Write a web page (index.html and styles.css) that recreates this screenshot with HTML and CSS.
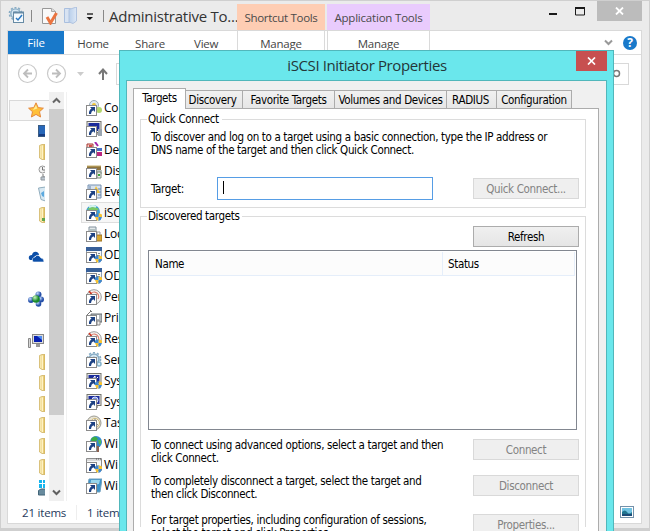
FILE: index.html
```html
<!DOCTYPE html>
<html lang="en">
<head>
<meta charset="utf-8">
<title>Administrative Tools</title>
<link rel="stylesheet" href="styles.css">
</head>
<body>
<svg class="defs" width="0" height="0">
  <defs>
    <linearGradient id="gold" x1="0" x2="1"><stop offset="0" stop-color="#fbeebb"/><stop offset=".6" stop-color="#efd78c"/><stop offset="1" stop-color="#d9b858"/></linearGradient>
    <linearGradient id="pale" x1="0" x2="1"><stop offset="0" stop-color="#b9cfeb"/><stop offset="1" stop-color="#dde8f6"/></linearGradient>
    <radialGradient id="blueball" cx=".35" cy=".3"><stop offset="0" stop-color="#c4dcff"/><stop offset="1" stop-color="#254fa8"/></radialGradient>
    <radialGradient id="greenball" cx=".35" cy=".3"><stop offset="0" stop-color="#c8f5bd"/><stop offset="1" stop-color="#198a2c"/></radialGradient>
    <symbol id="link" viewBox="0 0 16 16"><rect x=".5" y="5.500" width="10" height="10" fill="#fff" stroke="#8b8b8b"/><path d="M4 7h5v5L7.300 10.300Q5 11.500 5 14H3Q2.500 10.500 5.500 8.500Z" fill="#1d4284"/></symbol>
    <symbol id="shield" viewBox="0 0 16 16"><path d="M12.500 8 16 9.500V12H12.500ZM9 12H12.500V16Q9.500 15 9 12Z" fill="#f7c331"/><path d="M9 9.500 12.500 8V12H9ZM12.500 12H16Q15.500 15 12.500 16Z" fill="#3f88cf"/></symbol>
    <symbol id="folder" viewBox="0 0 16 16"><path d="M1.500 1.500 4 .5H7V15.500H4L1.500 14Z" fill="url(#gold)" stroke="#d1b463" stroke-width=".8"/><path d="M4.500 1.500V15" stroke="#fff2c4"/></symbol>
    <symbol id="gear" viewBox="0 0 16 16"><circle cx="8" cy="7" r="5" fill="#d5e7f3" stroke="#86abc4" stroke-width="1.500"/><circle cx="8" cy="7" r="6.500" fill="none" stroke="#86abc4" stroke-width="1.700" stroke-dasharray="2.200 1.900"/><circle cx="8" cy="7" r="2" fill="#fff" stroke="#86abc4"/></symbol>
    <symbol id="window" viewBox="0 0 16 16"><rect x=".5" y=".5" width="15" height="13" fill="#f7f9fb" stroke="#8da0b5"/><path d="M0 0H16V4H0Z" fill="#375f98"/><path d="M2 6.500h4M7 6.500h4M12 6.500h2M11 8.500h3" stroke="#7e8d9a"/></symbol>
    <symbol id="gauge" viewBox="0 0 16 16"><circle cx="8" cy="8" r="7.300" fill="#f6f6f4" stroke="#9b9b9b"/><path d="M4 9A4.500 4.500 0 1 1 12 10" fill="none" stroke="#dd8170" stroke-width="1.200"/><path d="M3 2 9 10" stroke="#c93523" stroke-width="1.600"/></symbol>
    <symbol id="screen" viewBox="0 0 16 16"><rect x="1" y=".5" width="14" height="11" fill="#eeeeea" stroke="#74746e"/><rect x="2.500" y="2" width="11" height="8" fill="#1b2c9c"/><path d="M6 12h6v2H6Z" fill="#aaa"/></symbol>
  </defs>
</svg>

<div class="explorer">
  <header class="titlebar">
    <div class="quick">
      <svg width="18" height="18" viewBox="0 0 18 18"><use href="#gear" width="15" height="15"/><rect x="5.500" y="5.500" width="10" height="10" fill="#f5fafd" stroke="#678ba5"/><path d="M5 5.500h11" stroke="#678ba5" stroke-width="2"/><path d="m8 11 2 2 4-5" fill="none" stroke="#2a78c2" stroke-width="1.500"/></svg>
      <i class="bar"></i>
      <svg class="props" width="16" height="18" viewBox="0 0 16 18"><path d="M.5 1.500h9l4 3v12H.5Z" fill="#f9f9f9" stroke="#989898"/><path d="M9.500 1.500v3h4" fill="#ddd" stroke="#aaa"/><path d="M5 10 8.500 16 14.500 6" fill="none" stroke="#ea7440" stroke-width="3"/></svg>
      <svg class="newf" width="14" height="18" viewBox="0 0 14 18"><path d="M.5 1.500h6v14h-6Z" fill="#d8e3f2" stroke="#a9bfdf"/><path d="M5 2.500 12.500 0V14L9 16.500 5 15Z" fill="url(#pale)" stroke="#b0c3e0"/></svg>
      <svg class="more" width="8" height="8" viewBox="0 0 8 8"><path d="M1 1h6" stroke="#222" stroke-width="1.400"/><path d="M.5 4h6.500L3.800 7Z" fill="#111"/></svg>
      <i class="bar"></i>
      <span class="title">Administrative To...</span>
    </div>
    <div class="ctx shortcut">Shortcut Tools</div>
    <div class="ctx application">Application Tools</div>
    <div class="controls">
      <svg width="62" height="20" viewBox="0 0 62 20"><path d="M14 13h8" stroke="#1a1a1a" stroke-width="2"/><path d="M40.500 7h9v7h-9Z" fill="none" stroke="#1a1a1a"/><path d="M40 7h10" stroke="#1a1a1a" stroke-width="2"/></svg>
      <div class="close"><svg width="9" height="8" viewBox="0 0 9 8"><path d="m1 .5 7 7m0-7-7 7" stroke="#fff" stroke-width="1.800"/></svg></div>
    </div>
  </header>

  <div class="frame">
    <nav class="ribbon">
      <span class="file">File</span>
      <span class="home">Home</span>
      <span class="share">Share</span>
      <span class="view">View</span>
      <span class="manage first">Manage</span>
      <span class="manage second">Manage</span>
      <div class="help">
        <svg width="9" height="7" viewBox="0 0 9 7"><path d="m1 1.500 3.500 3.500L8 1.500" fill="none" stroke="#999" stroke-width="2"/></svg>
        <span class="question">?</span>
      </div>
    </nav>
    <div class="address">
      <svg width="92" height="22" viewBox="0 0 92 22" fill="none"><g stroke="#c9c9c9" stroke-width="1.200"><circle cx="19.500" cy="10.500" r="9"/><circle cx="48.500" cy="10.500" r="9"/></g><path d="M24 10.500h-8m4-4-4 4 4 4M44 10.500h8m-4-4 4 4-4 4" stroke="#bdbdbd" stroke-width="1.800"/><path d="M69 9h7l-3.500 4Z" fill="#ccc"/></svg>
      <svg class="up" width="10" height="12" viewBox="0 0 10 12"><path d="M5 12V2M1 6l4-4.500L9 6" fill="none" stroke="#787878" stroke-width="2"/></svg>
      <div class="field"></div>
      <div class="search"><svg width="8" height="9" viewBox="0 0 8 9"><circle cx="3.500" cy="4.500" r="3" fill="none" stroke="#777" stroke-width="1.500"/></svg></div>
    </div>
    <div class="content">
      <div class="tree">
        <div class="node selected"><svg width="16" height="16" viewBox="0 0 16 16"><path d="m8 .8 2.200 4.800 5.200.6-3.900 3.500 1.100 5.300L8 12.400 3.400 15l1.100-5.300L.6 6.200l5.200-.6Z" fill="#ffc038" stroke="#e5893e"/><path d="m8 3 1.300 3.500L5 8Z" fill="#ffec94"/></svg></div>
        <div class="node sub"><svg width="16" height="16"><rect x=".5" y="2.500" width="15" height="11" fill="#2867b8" stroke="#395b83"/><path d="M1 11h14v2H1Z" fill="#163c82"/></svg></div>
        <div class="node sub"><svg width="16" height="16"><use href="#folder"/></svg></div>
        <div class="node sub"><svg width="16" height="16"><circle cx="4.500" cy="4.500" r="3.500" fill="#f4f4f4" stroke="#999"/><path d="M4.500 2v3H7M5 9v3h2" stroke="#777" fill="none"/><path d="M3 12h5v3H3Z" fill="#bcc6cf" stroke="#8e969d"/></svg></div>
        <div class="node sub"><svg width="16" height="16"><path d="m.5 2 7-1v14L3 13.500Z" fill="#d8e9f3" stroke="#91adbd"/><path d="m3 7 3-2v6L4 10Z" fill="#5ca9df"/></svg></div>
        <div class="node sub"><svg width="16" height="16"><use href="#folder"/><path d="M4 11h5v3H4Z" fill="#61a64a"/></svg></div>
        <div class="node"></div>
        <div class="node"><svg width="16" height="16" viewBox="0 0 16 16"><path d="M1 10Q0 6 4 6 5 2 9 3q2 1 2 3l-4 1-2 4H2Z" fill="#0b4ea8"/><path d="M5 13Q3 9 7 8q3-4 6 1 3 0 3 4Z" fill="#0b4ea8" stroke="#fff" stroke-width=".6"/></svg></div>
        <div class="node"></div>
        <div class="node"><svg width="16" height="16" viewBox="0 0 16 16"><g fill="url(#blueball)"><circle cx="10.500" cy="3.500" r="3"/><circle cx="3" cy="9" r="3"/><circle cx="13" cy="8.500" r="3"/><circle cx="10.500" cy="13" r="2.800"/></g><circle cx="8" cy="8" r="3.800" fill="url(#greenball)"/></svg></div>
        <div class="node"></div>
        <div class="node"><svg width="16" height="16" viewBox="0 0 16 16"><rect x="4.500" y="1.500" width="11" height="9" fill="#ddd" stroke="#888"/><path d="M6 3h8v6H6Z" fill="#0720b1"/><path d="m9 3 5 4V3Z" fill="#508cf0"/><path d="M8 11h4v3H8Z" fill="#999"/><path d="M.5 5.500h2v9h-2Z" fill="#d8d8d8" stroke="#888"/></svg></div>
        <div class="node sub"><svg width="16" height="16"><use href="#folder"/></svg></div>
        <div class="node sub"><svg width="16" height="16"><use href="#folder"/></svg></div>
        <div class="node sub"><svg width="16" height="16"><use href="#folder"/></svg></div>
        <div class="node sub"><svg width="16" height="16"><use href="#folder"/></svg></div>
        <div class="node sub"><svg width="16" height="16"><use href="#folder"/></svg></div>
        <div class="node sub"><svg width="16" height="16"><use href="#folder"/></svg></div>
        <div class="node sub"><svg width="16" height="16"><path d="M1 0h3v3H1ZM5 0h3v3H5ZM1 4h3v4H1ZM5 4h3v4H5Z" fill="#14b5ee"/><path d="M.5 10.500 3 9h5v6H.5Z" fill="#688b9e" stroke="#426578"/></svg></div>
      </div>
      <div class="scroll">
        <div class="arrow"><svg width="9" height="7" viewBox="0 0 9 7"><path d="M1 5.500 4.500 2 8 5.500" fill="none" stroke="#666" stroke-width="2"/></svg></div>
        <div class="thumb"></div>
        <div class="arrow down"><svg width="9" height="7" viewBox="0 0 9 7"><path d="M1 1.500 4.500 5 8 1.500" fill="none" stroke="#606060" stroke-width="2"/></svg></div>
      </div>
      <div class="list">
        <div class="item"><svg width="16" height="16"><circle cx="8" cy="5" r="4.500" fill="#dfe8ef" stroke="#9aabb7"/><circle cx="8" cy="5" r="2" fill="#efc535"/><circle cx="13" cy="10" r="3" fill="#b3d66d"/><use href="#link"/></svg>Co</div>
        <div class="item"><svg width="16" height="16"><use href="#screen"/><path d="M12 8h4v7h-4Z" fill="#9aa5b0"/><use href="#link"/></svg>Co</div>
        <div class="item"><svg width="16" height="16"><path d="M1 2h6v6H1Z" fill="#f3d0c6" stroke="#a63932"/><path d="M3 3h3v3H3Z" fill="#d44848"/><path d="M9 0l3 4" stroke="#a423ac" stroke-width="2"/><path d="M8 5h3v3H8Z" fill="#51a84a"/><path d="M11 6h5v3h-5Z" fill="#4870c5"/><path d="M11 10h5v4h-5Z" fill="#ba277f"/><use href="#link"/></svg>Def</div>
        <div class="item"><svg width="16" height="16"><path d="M1 3h14v4H1Z" fill="#8e743d"/><path d="M1 3h14" stroke="#c8b16e"/><path d="M6 7h10v4H6Z" fill="#bac3c2"/><path d="M11 9h4v6h-4Z" fill="#eee" stroke="#7c8b7c"/><path d="M13 11v2" stroke="#37a437" stroke-width="2"/><use href="#link"/></svg>Dis</div>
        <div class="item"><svg width="16" height="16"><path d="M2 1h13v13H2Z" fill="#d7e2ef" stroke="#7590b1"/><path d="M4 2v10M12 5h3M12 8h3M12 11h3" stroke="#6484ad"/><path d="m10 2 4 7H7Z" fill="#efc43c"/><path d="M10 5v3" stroke="#684b00"/><use href="#link"/></svg>Eve</div>
        <div class="item active"><svg width="16" height="16"><circle cx="7" cy="7" r="7" fill="#3e9fd6"/><path d="M1 4Q7 0 13 4L9 7 4 5Z" fill="#7bc963"/><path d="M3 2q4-2 7 0" stroke="#d6f4ee" stroke-width="2" fill="none"/><use href="#link"/><use href="#shield"/></svg>iSC</div>
        <div class="item"><svg width="16" height="16"><path d="M3 1h7v12H3Z" fill="#e4e9eb" stroke="#81919c"/><path d="M4 4h5" stroke="#809898"/><path d="M9 9h7v6H9Z" fill="#d8a630" stroke="#9b7122"/><path d="M11 9V6h3v3" stroke="#999" fill="none"/><use href="#link"/></svg>Loc</div>
        <div class="item"><svg width="16" height="16"><use href="#window"/><use href="#link"/><use href="#shield"/></svg>OD</div>
        <div class="item"><svg width="16" height="16"><use href="#window"/><use href="#link"/><use href="#shield"/></svg>OD</div>
        <div class="item"><svg width="16" height="16"><use href="#gauge"/><use href="#link"/></svg>Per</div>
        <div class="item"><svg width="16" height="16"><path d="M5 4h11v8H5Z" fill="#b1b8bd" stroke="#686e73"/><path d="M8 5h5v4H8Z" fill="#fff"/><path d="m1 5 4-4M4 0l2 2" stroke="#777"/><path d="M11 11h3v4h-3Z" fill="#eee" stroke="#888"/><use href="#link"/></svg>Pri</div>
        <div class="item"><svg width="16" height="16"><use href="#gauge"/><use href="#link"/><use href="#shield"/></svg>Res</div>
        <div class="item"><svg width="16" height="16"><use href="#gear"/><circle cx="13" cy="12" r="2" fill="#d9edf7" stroke="#84b2ca" stroke-width="1.500"/><use href="#link"/></svg>Ser</div>
        <div class="item"><svg width="16" height="16"><use href="#screen"/><path d="m6 7 3-4v4l3-3" stroke="#fff" fill="none"/><use href="#link"/><use href="#shield"/></svg>Sys</div>
        <div class="item"><svg width="16" height="16"><use href="#screen"/><circle cx="9" cy="6" r="3" fill="#7892e5" stroke="#dbe2fa"/><use href="#link"/></svg>Sys</div>
        <div class="item"><svg width="16" height="16"><circle cx="8" cy="8" r="7" fill="#e8e3d3" stroke="#9b9b94"/><circle cx="9" cy="8" r="4.500" fill="#fffdf3" stroke="#cbb673"/><path d="M9 4v4l3 2" stroke="#777" fill="none"/><use href="#link"/></svg>Tas</div>
        <div class="item"><svg width="16" height="16"><circle cx="10" cy="6" r="6" fill="#318bcc"/><path d="M5 3q4-5 7 0l-3 3v4L6 8Z" fill="#3cac44"/><path d="M12 4h3v4h-2Z" fill="#50b75d"/><path d="M3 5h6v9H3Z" fill="#a1563c"/><path d="M10 10h3v6h-3Z" fill="#8d6250"/><use href="#link"/></svg>Wi</div>
        <div class="item"><svg width="16" height="16"><path d="M.5 1.500h15v12H.5Z" fill="#f7f8f9" stroke="#8c8c8c"/><path d="M1 3h14" stroke="#bbb"/><path d="M10 2h1M12 2h1M14 2h1" stroke="#555"/><use href="#link"/><use href="#shield"/></svg>Wi</div>
        <div class="item"><svg width="16" height="16"><path d="M3 1h13l-2 13H1Z" fill="#3c93ca" stroke="#6d9fbd"/><path d="M5 2h9l-1 4-9 2Z" fill="#97d5ec"/><use href="#link"/></svg>Wi</div>
      </div>
    </div>
    <footer class="status"><span>21 items</span><span class="count">1 item</span>
      <svg width="14" height="13" viewBox="0 0 14 13"><rect x=".5" y=".5" width="13" height="11" fill="#fff" stroke="#7491aa"/><path d="M2 2h10v8H2Z" fill="#72c3e2"/><path d="M2 6q3-3 5 0t5 0v4H2Z" fill="#21758f"/><path d="M2 9h10" stroke="#1c4b78" stroke-width="2"/></svg>
    </footer>
  </div>
</div>

<section class="dialog">
  <header class="dialog-title"><h1>iSCSI Initiator Properties</h1><div class="dialog-close"><svg width="9" height="8" viewBox="0 0 9 8"><path d="m1 .5 7 7m0-7-7 7" stroke="#fff" stroke-width="1.700"/></svg></div></header>
  <div class="dialog-body">
    <div class="tabs">
      <div class="tab current"><span>Targets</span></div><div class="tab discovery"><span>Discovery</span></div><div class="tab favorite"><span>Favorite Targets</span></div><div class="tab volumes"><span>Volumes and Devices</span></div><div class="tab radius"><span>RADIUS</span></div><div class="tab config"><span>Configuration</span></div>
    </div>
    <div class="page">
      <fieldset class="quick-connect">
        <legend>Quick Connect</legend>
        <p>To discover and log on to a target using a basic connection, type the IP address or<br>DNS name of the target and then click Quick Connect.</p>
        <div class="target-row"><label>Target:</label><div class="input"><i></i></div><button disabled>Quick Connect...</button></div>
      </fieldset>
      <fieldset class="discovered">
        <legend>Discovered targets</legend>
        <div class="refresh"><button>Refresh</button></div>
        <div class="table"><div class="thead"><span>Name</span><span>Status</span></div></div>
        <div class="action a1"><p>To connect using advanced options, select a target and then<br>click Connect.</p><button disabled>Connect</button></div>
        <div class="action a2"><p>To completely disconnect a target, select the target and<br>then click Disconnect.</p><button disabled>Disconnect</button></div>
        <div class="action a3"><p>For target properties, including configuration of sessions,<br>select the target and click Properties.</p><button disabled>Properties...</button></div>
      </fieldset>
    </div>
  </div>
</section>
</body>
</html>
```
FILE: styles.css
```css
* { box-sizing: border-box; }
html, body { margin: 0; width: 650px; height: 531px; overflow: hidden; }
body { position: relative; font-family: "Open Sans", "Noto Sans", sans-serif; font-size: 12px; color: #000; background: #ebebeb; }
svg { display: block; flex: none; }
.defs { position: absolute; }

.explorer { height: 531px; padding: 0 7px 0 6px; border: 1px solid #cfcfcf; border-bottom-width: 3px; display: flex; flex-direction: column; }
.titlebar { height: 29px; display: flex; }
.quick { width: 230px; height: 29px; display: flex; align-items: center; padding-left: 1px; flex: none; }
.bar { width: 1px; height: 12px; background: #888; margin-left: 5px; flex: none; }
.props { margin-left: 10px; }
.newf { margin-left: 6px; }
.more { margin: 3px 9px 0 8px; }
.more + .bar { margin-left: 0; }
.title { font-size: 15px; margin-left: 5px; color: #333; white-space: nowrap; letter-spacing: -0.250px; }
.ctx { height: 27px; margin-top: 3px; display: flex; align-items: center; justify-content: center; color: #4a4a4a; white-space: nowrap; font-size: 11.500px; }
.shortcut { width: 88px; background: #fecdb3; letter-spacing: -0.300px; }
.application { width: 103px; margin-left: 2px; background: #e9cbfd; letter-spacing: -0.200px; }
.controls { display: flex; margin-left: auto; }
.close { width: 45px; height: 20px; background: #bcbcbc; display: flex; align-items: center; justify-content: center; }

.frame { border: 1px solid #d9d9d9; height: 494px; background: #fff; display: flex; flex-direction: column; }
.ribbon { height: 24px; display: flex; border-bottom: 1px solid #dcdcdc; line-height: 25px; color: #444; flex: none; font-size: 11.500px; letter-spacing: -0.200px; }
.file { width: 56px; background: #1979ca; color: #fff; text-align: center; line-height: 23px; }
.home { width: 58px; text-align: center; }
.share { width: 56px; text-align: center; }
.view { width: 59px; padding-left: 16px; }
.manage { width: 88px; text-align: center; border-left: 1px solid #dadada; border-right: 1px solid #dadada; }
.second { width: 103px; margin-left: 2px; }
.help { margin-left: auto; display: flex; align-items: center; gap: 10px; padding-right: 4px; }
.question { width: 14px; height: 14px; border-radius: 50%; background: #1979ca; color: #fff; font-weight: 700; font-size: 12px; line-height: 14px; text-align: center; }
.address { height: 37px; display: flex; align-items: center; flex: none; }
.up { margin-left: -2px; }
.field { margin-left: 8px; width: 24px; height: 22px; border: 1px solid #d9d9d9; }
.search { margin-left: auto; margin-right: 12px; width: 40px; height: 22px; border: 1px solid #d9d9d9; display: flex; align-items: center; padding-left: 23px; }
.content { display: flex; height: 409px; }
.tree { width: 41px; padding-top: 8px; overflow: hidden; flex: none; }
.node { height: 21px; padding: 2px 0 0 20px; width: 37px; overflow: hidden; }
.node.sub { padding-left: 30px; }
.selected { margin-left: 1px; padding: 1px 0 0 18px; border: 1px solid #dadada; border-right: 0; background: #f7f7f7; width: 40px; }
.scroll { width: 15px; background: #f0f0f0; display: flex; flex-direction: column; }
.arrow { height: 17px; display: flex; align-items: center; justify-content: center; }
.thumb { height: 306px; background: #cdcdcd; }
.down { margin-top: auto; }
.list { margin-left: 2px; border-left: 1px solid #f1f1f1; padding: 5px 0 0 14px; width: 75px; }
.item { height: 21px; padding-left: 4px; border: 1px solid transparent; border-right: 0; display: flex; align-items: center; gap: 2px; white-space: nowrap; letter-spacing: -0.200px; }
.item.active { border-color: #dedede; background: #f7f7f7; }
.status { height: 22px; display: flex; align-items: center; color: #1e395b; padding-left: 14px; white-space: nowrap; font-size: 11.500px; letter-spacing: -0.200px; }
.status > span:first-child { width: 55px; border-right: 1px solid #eee; }
.count { margin-left: 10px; }
.status svg { margin-left: auto; margin-right: 7px; }

.dialog { position: absolute; left: 119px; top: 50px; width: 495px; height: 481px; overflow: hidden; background: #6ae7ec; border: 1px solid #51b7bb; border-bottom: 0; padding: 0 6px; font-family: "DejaVu Sans Condensed", "DejaVu Sans", sans-serif; font-stretch: condensed; font-size: 11.500px; letter-spacing: -0.350px; }
.dialog-title { height: 29px; display: flex; justify-content: center; }
h1 { font: 400 15px/29px "Open Sans", sans-serif; margin: 0 0 0 32px; flex: 1; text-align: center; color: #243638; letter-spacing: -0.380px; }
.dialog-close { width: 31px; height: 20px; background: #c75050; display: flex; align-items: center; justify-content: center; }
.dialog-body { border: 1px solid #51b7bb; border-bottom: 0; background: #f0f0f0; height: 451px; padding: 7px 7px 0 6px; }
.tabs { height: 20px; display: flex; align-items: flex-end; position: relative; z-index: 1; }
.tab { height: 19px; margin-bottom: -1px; border: 1px solid #acacac; border-left: 0; background: linear-gradient(#f1f1f1, #e6e6e6); line-height: 18px; text-align: center; white-space: nowrap; flex: none; }
.current { height: 21px; width: 53px; background: #fff; border-left: 1px solid #acacac; border-bottom: 0; }
.discovery { width: 57px; padding-right: 3px; }
.favorite { width: 92px; }
.volumes { width: 112px; }
.radius { width: 50px; padding-right: 2px; }
.config { width: 75px; }
.page { border: 1px solid #acacac; border-bottom: 0; background: #fff; height: 423px; padding: 3px 12px 0 6px; }
fieldset { margin: 0; border: 1px solid #dcdcdc; padding: 0 0 0 10px; min-width: 0; }
legend { padding: 0 3px 0 1px; margin-left: -4px; line-height: 14px; height: 14px; white-space: nowrap; }
p { margin: 0; line-height: 13px; white-space: nowrap; }
.quick-connect { height: 96px; }
.quick-connect p { padding-top: 5px; }
.target-row { display: flex; align-items: center; margin-top: 20px; }
label { width: 66px; }
.input { width: 216px; height: 23px; border: 1px solid #569de5; padding: 3px 5px; }
.input i { display: block; width: 1px; height: 13px; background: #000; }
button { display: block; font: inherit; letter-spacing: inherit; width: 106px; height: 21px; padding: 0; border: 1px solid #acacac; background: linear-gradient(#f0f0f0, #e5e5e5); color: #000; }
button:disabled { border-color: #d9d9d9; background: #efefef; color: #838383; }
.target-row button { margin-left: 40px; }
.discovered { height: 318px; border-bottom: 0; margin-top: 1px; }
.refresh { padding: 3px 6px 0 0; display: flex; justify-content: flex-end; }
.table { margin: 3px 8px 0 -3px; height: 180px; border: 1px solid #828790; padding: 1px; }
.thead { height: 24px; display: flex; align-items: center; background: #fcfcfc; border-bottom: 1px solid #e5eefa; }
.thead span { padding-left: 5px; line-height: 24px; width: 293px; border-right: 1px solid #e5eefa; }
.thead span:last-child { width: 132px; }
.action { display: flex; justify-content: space-between; padding-right: 6px; }
.a1 { margin-top: 9px; height: 36px; }
.a2 { height: 39px; }
.a3 { height: 17px; }
```
